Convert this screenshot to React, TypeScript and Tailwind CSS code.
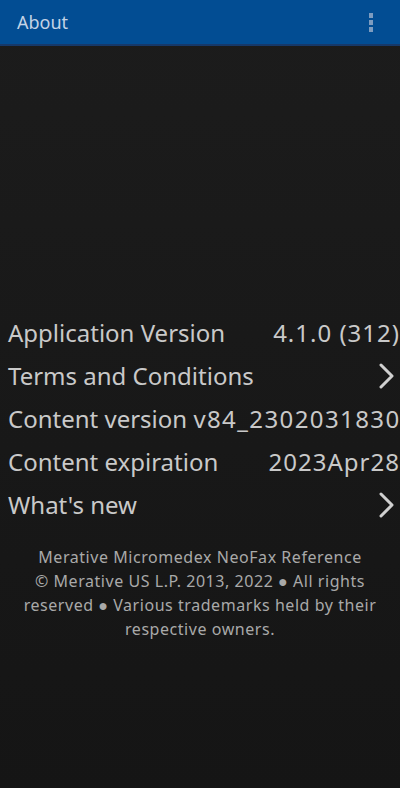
const ROWS: { label: string; value?: string; chevron?: boolean }[] = [
  { label: "Application Version", value: "4.1.0 (312)" },
  { label: "Terms and Conditions", chevron: true },
  { label: "Content version" },
  { label: "Content expiration", value: "2023Apr28" },
  { label: "What's new", chevron: true },
];

function Chevron() {
  return (
    <svg width="15" height="26" viewBox="0 0 15 26" fill="none" className="mr-[6px]">
      <polyline
        points="2,2 13,13 2,24"
        stroke="#d0d0d0"
        strokeWidth="3"
        strokeLinecap="round"
        strokeLinejoin="round"
      />
    </svg>
  );
}

export default function App() {
  return (
    <div
      className="flex h-[788px] w-[400px] flex-col bg-gradient-to-b from-[#1c1c1c] to-[#151515]"
      style={{ fontFamily: '"Noto Sans", "Open Sans", sans-serif' }}
    >
      <header className="flex h-[46px] shrink-0 items-center justify-between border-b-2 border-[#16396a] bg-[#024d93] pl-[17px] pr-[27px]">
        <span className="text-[18px] text-[#c3d3e6]">About</span>
        <span className="flex flex-col gap-[2px]">
          <span className="h-[5px] w-[4px] bg-[#7d9cc0]" />
          <span className="h-[5px] w-[4px] bg-[#7d9cc0]" />
          <span className="h-[5px] w-[4px] bg-[#7d9cc0]" />
        </span>
      </header>

      <main className="flex flex-col pt-[265px]">
        {ROWS.map((r) => (
          <div
            key={r.label}
            className="flex h-[43px] items-center justify-between pl-2 text-[24px] leading-none text-[#c9c9c9]"
          >
            {r.label === "Content version" ? (
              <span className="whitespace-nowrap">
                Content version <span className="tracking-[1.4px]">v84_2302031830</span>
              </span>
            ) : (
              <span className="whitespace-nowrap">{r.label}</span>
            )}
            {r.value && <span className="whitespace-nowrap tracking-[1px]">{r.value}</span>}
            {r.chevron && <Chevron />}
          </div>
        ))}

        <p className="mt-[19px] text-center text-[16px] leading-[24px] tracking-[0.55px] text-[#a9a9a9]">
          Merative Micromedex NeoFax Reference
          <br />© Merative US L.P. 2013, 2022 ● All rights
          <br />
          reserved ● Various trademarks held by their
          <br />
          respective owners.
        </p>
      </main>
    </div>
  );
}
